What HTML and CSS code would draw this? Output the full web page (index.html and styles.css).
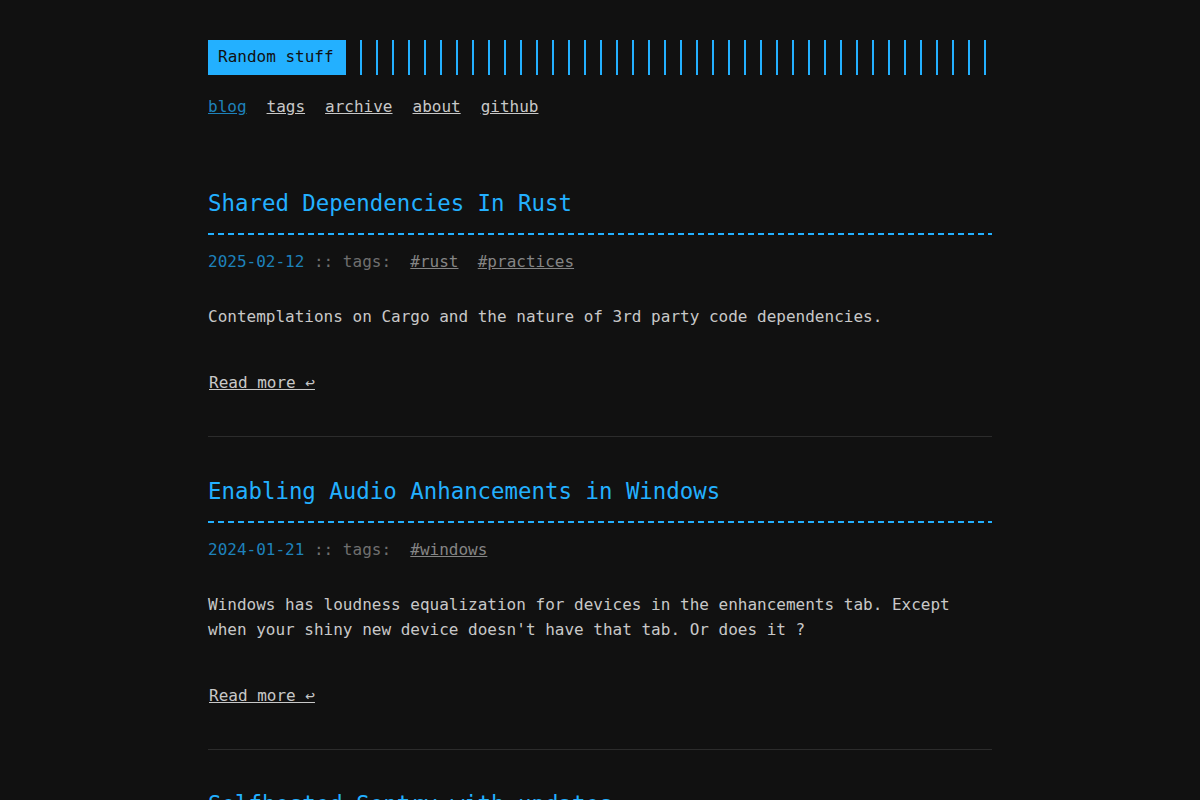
FILE: index.html
```html
<!DOCTYPE html>
<html lang="en">
<head>
    <meta charset="UTF-8">
    <meta name="viewport" content="width=device-width, initial-scale=1.0">
    <title>Random stuff</title>
    <link rel="stylesheet" href="styles.css">
</head>
<body>
    <div class="container">
        <header class="header">
            <div class="header__inner">
                <a class="logo" href="#">Random stuff</a>
                <span class="header__stripes"></span>
            </div>
            <nav class="menu">
                <a class="menu__item menu__item--active" href="#">blog</a>
                <a class="menu__item" href="#">tags</a>
                <a class="menu__item" href="#">archive</a>
                <a class="menu__item" href="#">about</a>
                <a class="menu__item" href="#">github</a>
            </nav>
        </header>

        <main class="posts">
            <article class="post">
                <h1 class="post__title"><a href="#">Shared Dependencies In Rust</a></h1>
                <div class="post__meta">
                    <span class="post__date">2025-02-12</span> :: tags:&nbsp;
                    <a class="post__tag" href="#">#rust</a>&nbsp;
                    <a class="post__tag" href="#">#practices</a>
                </div>
                <div class="post__content">
                    <p>Contemplations on Cargo and the nature of 3rd party code dependencies.</p>
                </div>
                <a class="post__more" href="#">Read more ↩</a>
            </article>

            <article class="post">
                <h1 class="post__title"><a href="#">Enabling Audio Anhancements in Windows</a></h1>
                <div class="post__meta">
                    <span class="post__date">2024-01-21</span> :: tags:&nbsp;
                    <a class="post__tag" href="#">#windows</a>
                </div>
                <div class="post__content">
                    <p>Windows has loudness equalization for devices in the enhancements tab. Except when your shiny new device doesn't have that tab. Or does it ?</p>
                </div>
                <a class="post__more" href="#">Read more ↩</a>
            </article>

            <article class="post">
                <h1 class="post__title"><a href="#">Selfhosted Sentry with updates</a></h1>
            </article>
        </main>
    </div>
</body>
</html>
```

FILE: styles.css
```css
:root {
    --background: #111111;
    --text: #c8c8c8;
    --accent: #23b0ff;
    --accent-dim: #1e82bb;
    --muted: #6f6f6f;
    --tag: #858585;
    --rule: #2c2c2c;
}

* {
    box-sizing: border-box;
}

html,
body {
    margin: 0;
    padding: 0;
}

body {
    background: var(--background);
    color: var(--text);
    font-family: "DejaVu Sans Mono", "Liberation Mono", monospace;
    font-size: 16px;
    line-height: 25px;
}

a {
    color: inherit;
}

.container {
    width: 784px;
    margin: 0 auto;
    padding-top: 40px;
}

/* header: logo block followed by the striped bar */
.header__inner {
    display: flex;
    height: 35px;
}

.logo {
    display: flex;
    align-items: center;
    padding: 4px 12px 6px 10px;
    background: var(--accent);
    color: #111;
    text-decoration: none;
}

.header__stripes {
    flex: 1;
    margin-left: 14px;
    background: repeating-linear-gradient(90deg, var(--accent) 0 2px, transparent 2px 16px);
}

.menu {
    display: flex;
    gap: 20px;
    margin-top: 19px;
}

.menu__item {
    color: var(--text);
}

.menu__item--active {
    color: var(--accent-dim);
}

/* post list */
.posts {
    margin-top: 67px;
}

.post {
    padding-bottom: 41px;
    border-bottom: 1px solid var(--rule);
    margin-bottom: 37px;
}

.post__title {
    margin: 0;
    padding-bottom: 15px;
    font-size: 22.4px;
    font-weight: normal;
    line-height: 34px;
    color: var(--accent);
    /* dashed underline drawn inside the bottom padding */
    background: repeating-linear-gradient(90deg, var(--accent) 0 6px, transparent 6px 10px) left bottom / 100% 2px no-repeat;
}

.post__title a {
    color: inherit;
    text-decoration: none;
}

.post__meta {
    margin-top: 14px;
    color: var(--muted);
}

.post__date {
    color: var(--accent-dim);
}

.post__tag {
    color: var(--tag);
}

.post__content p {
    margin: 30.9px 0 0;
    line-height: 24.64px;
}

.post__more {
    display: inline-block;
    margin-top: 40.5px;
    margin-left: 1px;
    color: var(--text);
}
```
